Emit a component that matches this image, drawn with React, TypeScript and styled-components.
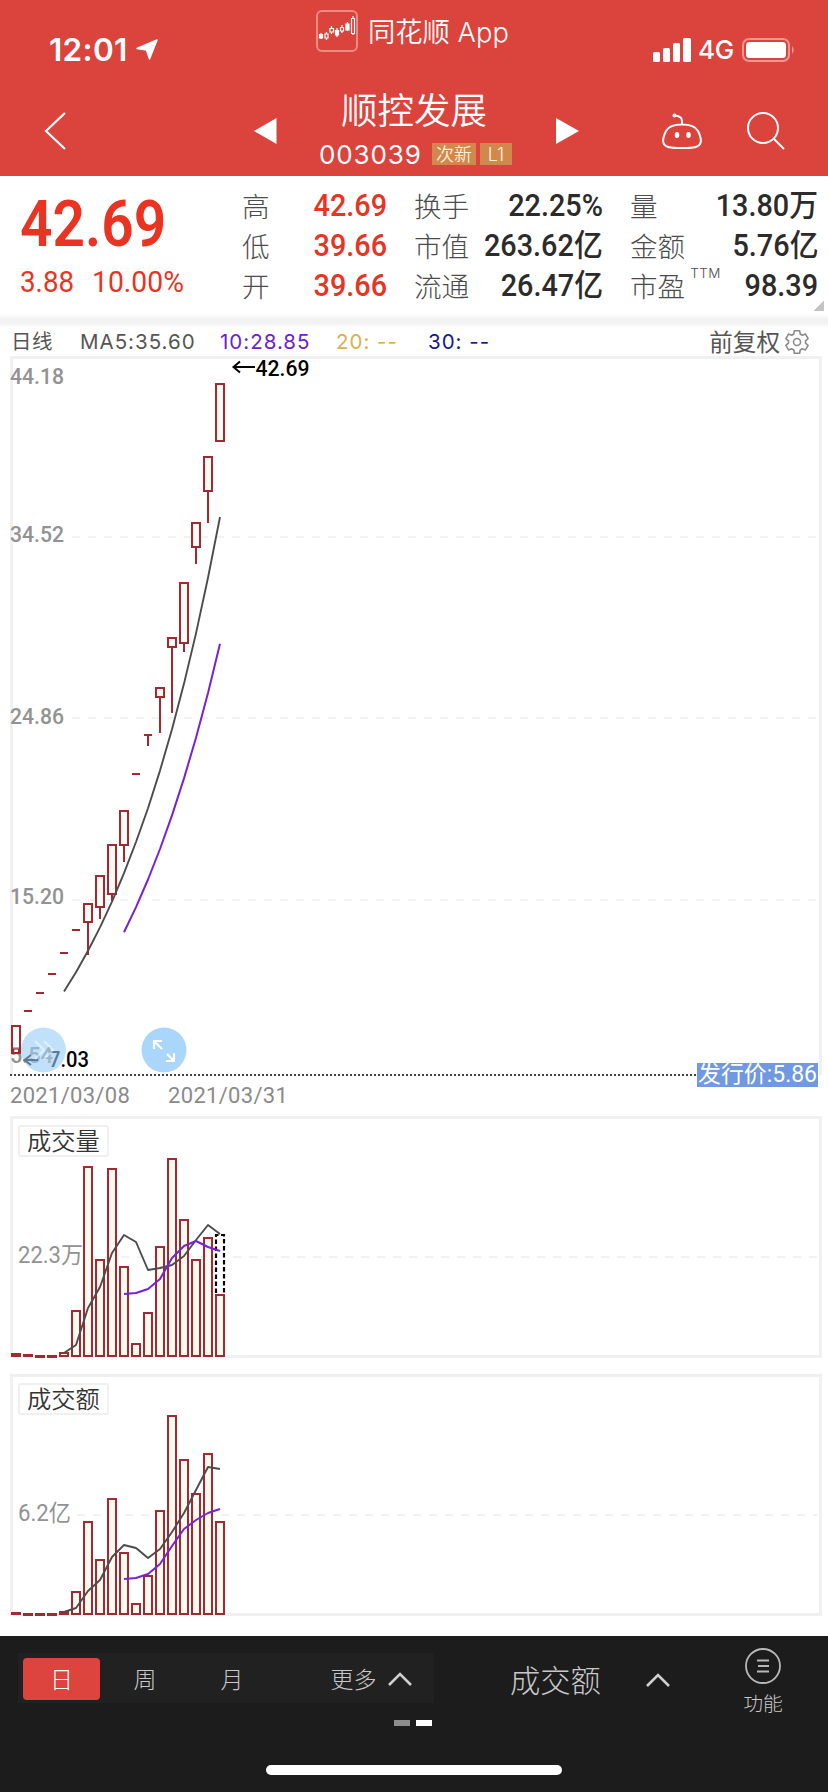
import React from "react";
import styled, { createGlobalStyle } from "styled-components";

const CJK = '"Noto Sans CJK SC", sans-serif';
const UI = `Inter, ${CJK}`;
const DIN = `Roboto, ${CJK}`;

const GlobalStyle = createGlobalStyle`
  * { box-sizing: border-box; }
  body { margin: 0; background: #fff; font-family: ${UI}; }
  svg { display: block; flex: none; overflow: visible; }
`;

const Page = styled.main`
  width: 828px;
  height: 1792px;
  display: flex;
  flex-direction: column;
  overflow: hidden;
  background: #fff;
`;

/* ---------- header ---------- */
const Header = styled.header`
  height: 176px;
  background: #db433d;
  color: #fff;
  display: flex;
  flex-direction: column;
`;
const StatusBar = styled.div`
  height: 88px;
  display: flex;
`;
const StatusSide = styled.div<{ $width: number; $left: number }>`
  width: ${(p) => p.$width}px;
  padding: 12px 0 0 ${(p) => p.$left}px;
  display: flex;
  align-items: center;
  height: 88px;
`;
const Clock = styled.span`
  font-size: 31.5px;
  font-weight: 600;
  line-height: 36px;
  width: 86px;
  letter-spacing: 0.3px;
`;
const Network = styled.span`
  font-size: 26px;
  font-weight: 500;
  line-height: 30px;
  width: 44px;
  letter-spacing: -0.3px;
`;
const AppBadge = styled.div`
  width: 300px;
  height: 62px;
  display: flex;
  align-items: center;
  gap: 10px;
  font-size: 27.3px;
  line-height: 34px;
  font-weight: 350;
  white-space: nowrap;
`;
const AppName = styled.span`
  padding-top: 3px;
`;
const NavBar = styled.nav`
  height: 88px;
  display: flex;
`;
const NavSlot = styled.div<{ $width: number; $left: number }>`
  width: ${(p) => p.$width}px;
  height: 86px;
  padding-left: ${(p) => p.$left}px;
  display: flex;
  align-items: center;
`;
const StockTitle = styled.div`
  width: 200px;
  padding-right: 4px;
  display: flex;
  flex-direction: column;
  align-items: center;
  white-space: nowrap;
`;
const StockName = styled.h1`
  margin: 0;
  font: 350 36.5px/42px ${CJK};
  height: 47px;
`;
const StockMeta = styled.div`
  display: flex;
  align-items: center;
  height: 38px;
  margin-right: -3px;
  gap: 4px;
`;
const StockCode = styled.span`
  font-size: 26px;
  width: 109px;
  letter-spacing: 0.9px;
`;
const Tag = styled.span<{ $width: number }>`
  width: ${(p) => p.$width}px;
  height: 22px;
  background: #d2884c;
  color: #fff1df;
  font: 350 18px/23px ${UI};
  text-align: center;
`;

/* ---------- quote ---------- */
const Quote = styled.section`
  height: 138px;
  display: flex;
`;
const LastPrice = styled.div`
  width: 242px;
  padding: 15px 0 0 20px;
  color: #e93323;
  font-family: ${DIN};
`;
const Squeezed = styled.span<{ $x: number; $right?: boolean }>`
  display: inline-block;
  white-space: nowrap;
  transform: scaleX(${(p) => p.$x});
  transform-origin: ${(p) => (p.$right ? "right" : "left")} center;
`;
const Price = styled.div`
  font-size: 65px;
  font-weight: 600;
  line-height: 66px;
`;
const Change = styled.div`
  display: flex;
  font-size: 29.5px;
  line-height: 50px;
`;
const ChangePart = styled.span<{ $width: number }>`
  width: ${(p) => p.$width}px;
`;
const StatColumn = styled.dl<{ $width: number; $gap: number }>`
  width: ${(p) => p.$width}px;
  margin: 10px ${(p) => p.$gap}px 0 0;
`;
const Stat = styled.div`
  height: 40px;
  display: flex;
  justify-content: space-between;
  align-items: center;
`;
const StatLabel = styled.dt`
  display: flex;
  height: 40px;
  font: 300 27.6px/39px ${CJK};
  color: #4c4c4c;
  white-space: nowrap;
`;
const Superscript = styled.sup`
  font: 300 13.5px/14px ${UI};
  letter-spacing: 0.4px;
  margin-left: 5px;
`;
const StatValue = styled.dd<{ $up?: boolean }>`
  margin: 0;
  width: 0;
  display: flex;
  justify-content: flex-end;
  font: 500 31px/40px ${DIN};
  color: ${(p) => (p.$up ? "#e93323" : "#2b2b2b")};
`;
const Divider = styled.div`
  height: 14px;
  display: flex;
  background: linear-gradient(#fff, #f3f3f3 35%, #f3f3f3 65%, #fff);
`;
const Corner = styled.div`
  width: 10px;
  height: 10px;
  margin: 125px 0 0 -4px;
  background: linear-gradient(135deg, transparent 50%, #c4c4c4 50%);
`;

/* ---------- legend ---------- */
const Legend = styled.div`
  height: 28px;
  padding: 0 19px 1px 11px;
  display: flex;
  align-items: center;
  font: 400 20.5px/27px ${UI};
  color: #555;
  white-space: nowrap;
`;
const LegendItem = styled.span<{ $width: number; $color?: string; $spacing?: number }>`
  width: ${(p) => p.$width}px;
  color: ${(p) => p.$color ?? "#555"};
  letter-spacing: ${(p) => p.$spacing ?? 1}px;
`;
const Adjust = styled.span`
  margin-left: auto;
  display: flex;
  align-items: center;
  gap: 5px;
  font: 400 23.6px/24px ${CJK};
`;
const AdjustLabel = styled.span`
  padding-bottom: 2px;
`;

/* ---------- charts ---------- */
const Panel = styled.section<{ $height: number; $open?: boolean }>`
  width: 812px;
  height: ${(p) => p.$height}px;
  margin-left: 10px;
  border: 3px solid #f0f0f0;
  ${(p) => p.$open && "border-bottom: 0;"}
`;
const Dates = styled.div`
  height: 41px;
  padding: 5px 0 0 10px;
  display: flex;
  gap: 38px;
  font: 400 22px/32px ${DIN};
  letter-spacing: 0.3px;
  color: #8a8a8a;
`;
const Gap = styled.div`
  height: 16px;
`;

/* ---------- footer ---------- */
const Footer = styled.footer`
  margin-top: auto;
  height: 156px;
  background: #1c1c1c;
  color: #c8c8c8;
  display: flex;
  flex-direction: column;
`;
const Tools = styled.div`
  height: 129px;
  padding-left: 18px;
  display: flex;
`;
const PeriodArea = styled.div`
  width: 416px;
  padding-top: 17px;
`;
const Periods = styled.div`
  height: 50px;
  padding: 5px;
  display: flex;
  background: #212121;
`;
const Period = styled.button<{ $width: number; $active?: boolean; $left?: number }>`
  width: ${(p) => p.$width}px;
  flex: none;
  height: 42px;
  padding: 0 0 0 ${(p) => p.$left ?? 0}px;
  border: 0;
  border-radius: 4px;
  display: flex;
  align-items: center;
  justify-content: center;
  gap: 11px;
  background: ${(p) => (p.$active ? "#dc443d" : "transparent")};
  color: ${(p) => (p.$active ? "#fff" : "#c8c8c8")};
  font: 300 23px/42px ${CJK};
`;
const PeriodLabel = styled.span`
  height: 44px;
`;
const Pager = styled.div`
  padding: 17px 2px 0 0;
  display: flex;
  justify-content: flex-end;
  gap: 6px;
`;
const PagerDot = styled.span<{ $on?: boolean }>`
  width: 16px;
  height: 6px;
  background: ${(p) => (p.$on ? "#fff" : "#8c8c8c")};
`;
const Indicator = styled.div`
  width: 309px;
  height: 88px;
  padding-left: 76px;
  display: flex;
  align-items: center;
  gap: 45px;
  font: 300 30.3px/40px ${CJK};
`;
const IndicatorName = styled.span`
  padding-bottom: 3px;
`;
const Menu = styled.div`
  width: 40px;
  padding-top: 12px;
  display: flex;
  flex-direction: column;
  align-items: center;
  font: 300 19.8px/28px ${CJK};
  white-space: nowrap;
  gap: 5px;
`;
const HomeBar = styled.div`
  width: 296px;
  height: 10px;
  border-radius: 5px;
  background: #fff;
  margin: 0 auto;
`;

/* ---------- data ---------- */
type Candle = { top: number; bottom?: number; wick?: number };
const candles: Candle[] = [
  { top: 1026, bottom: 1053 },
  { top: 1011 },
  { top: 993 },
  { top: 974 },
  { top: 953 },
  { top: 930 },
  { top: 904, bottom: 922, wick: 955 },
  { top: 876, bottom: 907, wick: 919 },
  { top: 845, bottom: 894, wick: 901 },
  { top: 811, bottom: 845, wick: 862 },
  { top: 774 },
  { top: 735, wick: 746 },
  { top: 688, bottom: 697, wick: 733 },
  { top: 638, bottom: 647, wick: 713 },
  { top: 583, bottom: 643, wick: 652 },
  { top: 523, bottom: 547, wick: 564 },
  { top: 457, bottom: 491, wick: 523 },
  { top: 384, bottom: 441 },
];
const volume = {
  tops: [1354, 1355, 1356, 1356, 1353, 1311, 1167, 1260, 1169, 1267, 1344, 1313, 1247, 1159, 1220, 1260, 1238, 1295],
  ma5: [1353, 1345, 1308, 1287, 1253, 1235, 1242, 1270, 1268, 1265, 1256, 1240, 1225, 1234],
  ma10: [1294, 1293, 1289, 1279, 1258, 1246, 1241, 1247, 1251],
};
const amount = {
  tops: [1613, 1614, 1614, 1614, 1612, 1592, 1522, 1560, 1499, 1553, 1604, 1576, 1511, 1416, 1460, 1494, 1454, 1522],
  ma5: [1612, 1608, 1591, 1580, 1557, 1545, 1548, 1558, 1549, 1532, 1513, 1490, 1467, 1469],
  ma10: [1579, 1578, 1574, 1564, 1546, 1529, 1520, 1513, 1509],
};

const RED = "#a02a2f";
const cx = (i: number) => 16 + 12 * i;
const line = (ys: number[], start: number) => ys.map((y, k) => `${cx(start + k)},${y}`).join(" ");
const average = (n: number) =>
  candles.slice(n - 1).map((_, k) => candles.slice(k, k + n).reduce((s, c) => s + c.top, 0) / n);

const GridLine = ({ y, from }: { y: number; from: number }) => (
  <line x1={from} x2={818} y1={y} y2={y} stroke="#efefef" strokeWidth={1.6} strokeDasharray="8 8" />
);
const ChartText = ({ x, y, w, color = "#929292", weight = 500, size = 22, children }: {
  x: number; y: number; w: number; color?: string; weight?: number; size?: number; children: string;
}) => (
  <text x={x} y={y} textLength={w} lengthAdjust="spacingAndGlyphs" fontFamily={DIN} fontSize={size} fontWeight={weight} fill={color}>
    {children}
  </text>
);
const Averages = ({ ma5, ma10 }: { ma5: number[]; ma10: number[] }) => (
  <g fill="none" strokeWidth={1.9} strokeLinejoin="round">
    <polyline points={line(ma5, 4)} stroke="#4c4c4c" />
    <polyline points={line(ma10, 9)} stroke="#7722d4" strokeWidth={2} />
  </g>
);

const PriceChart = () => (
  <svg width={806} height={714} viewBox="13 359 806 714">
    {[537, 718, 900].map((y) => <GridLine key={y} y={y} from={72} />)}
    <ChartText x={10} y={383.5} w={54}>44.18</ChartText>
    <ChartText x={10} y={542.3} w={54}>34.52</ChartText>
    <ChartText x={10} y={723.5} w={54}>24.86</ChartText>
    <ChartText x={10} y={904} w={54}>15.20</ChartText>
    <ChartText x={10} y={1063} w={43}>5.54</ChartText>
    {candles.map((c, i) => (
      <g key={i} stroke={RED} strokeWidth={2} fill="#fffaf6">
        {c.bottom ? (
          <rect x={cx(i) - 4} y={c.top} width={8} height={c.bottom - c.top} fillOpacity={i ? 1 : 0.3} />
        ) : (
          <line x1={cx(i) - 4} x2={cx(i) + 4} y1={c.top} y2={c.top} />
        )}
        {c.wick && <line x1={cx(i)} x2={cx(i)} y1={c.bottom ?? c.top} y2={c.wick} />}
      </g>
    ))}
    <rect x={13.5} y={1049} width={5} height={4} fill="none" stroke={RED} />
    <Averages ma5={average(5)} ma10={average(10)} />
    <g fill="none" stroke="#000" strokeWidth={2}>
      <path d="M255 367H234M240 361.5L233.5 367L240 372.5" />
      <path d="M38 1060H25M31 1055L24.5 1060L31 1065" />
    </g>
    <ChartText x={255.5} y={376} w={54} color="#000" weight={500}>42.69</ChartText>
    <ChartText x={49} y={1067} w={40} color="#000" weight={500}>7.03</ChartText>
    <line x1={10} x2={697} y1={1075} y2={1075} stroke="#444" strokeWidth={2} strokeDasharray="2 2" />
    <circle cx={43.5} cy={1050} r={22.5} fill="#98cdf9" fillOpacity={0.6} />
    <circle cx={164} cy={1050} r={22.5} fill="#abd6fb" />
    <g fill="none" stroke="#fff" strokeWidth={2.2}>
      <path d="M35 1041L44 1050L35 1059M44 1041L53 1050L44 1059" strokeOpacity={0.5} />
      <path d="M154 1049V1041H162M154 1041L162 1049M174 1053V1061H166M174 1061L167 1054" />
    </g>
    <rect x={697} y={1063} width={121} height={24} fill="#7099e2" />
    <ChartText x={698} y={1082} w={119} color="#fff" size={23} weight={400}>发行价:5.86</ChartText>
  </svg>
);

type BarChartProps = {
  top: number; grid: number; label: string; labelWidth: number; title: string;
  data: typeof volume; forecast?: boolean;
};
const BarChart = ({ top, grid, label, labelWidth, title, data, forecast }: BarChartProps) => {
  const base = top + 240;
  return (
    <svg width={806} height={236} viewBox={`13 ${top + 2} 806 236`}>
      <GridLine y={grid} from={24 + labelWidth} />
      <rect x={19} y={top + 9} width={89} height={30} rx={2} fill="#fff" stroke="#f0f0f0" strokeWidth={2} />
      <text x={27} y={top + 33} fontFamily={CJK} fontSize={24.3} fill="#333" fontWeight={350}>{title}</text>
      <ChartText x={18} y={grid + 5.5} w={labelWidth} size={23} weight={400}>{label}</ChartText>
      {data.tops.map((y, i) => (
        <rect key={i} x={cx(i) - 4} y={y} width={8} height={Math.max(base - 1 - y, 1)} fill="#fffaf0" stroke={RED} strokeWidth={2} />
      ))}
      {forecast && (
        <path d="M216 1293V1235H224V1293" fill="#fff" stroke="#000" strokeWidth={2.2} strokeDasharray="4.5 2.5" />
      )}
      <Averages ma5={data.ma5} ma10={data.ma10} />
    </svg>
  );
};

const Chevron = () => (
  <svg width={24} height={14} viewBox="0 0 24 14" fill="none" stroke="#d0d0d0" strokeWidth={2.6}>
    <path d="M1 13L12 2L23 13" />
  </svg>
);

const gearPath = () => {
  const corners: [number, number][] = [[-22, 8.6], [-13, 11.6], [13, 11.6], [22, 8.6]];
  const points = Array.from({ length: 6 }, (_, k) =>
    corners.map(([offset, r]) => {
      const a = ((k * 60 - 90 + offset) * Math.PI) / 180;
      return `${(12 + r * Math.cos(a)).toFixed(2)} ${(12 + r * Math.sin(a)).toFixed(2)}`;
    })
  ).flat();
  return `M${points.join("L")}Z`;
};

const stats = [
  { width: 145, gap: 27, rows: [["高", "42.69"], ["低", "39.66"], ["开", "39.66"]], up: true },
  { width: 189, gap: 27, rows: [["换手", "22.25%"], ["市值", "263.62亿"], ["流通", "26.47亿"]] },
  { width: 188, gap: 0, rows: [["量", "13.80万"], ["金额", "5.76亿"], ["市盈", "98.39"]] },
];

export default function App() {
  return (
    <Page>
      <GlobalStyle />
      <Header>
        <StatusBar>
          <StatusSide $width={316} $left={49}>
            <Clock>12:01</Clock>
            <svg width={24} height={22} viewBox="0 0 24 22" fill="#fff">
              <path d="M22 1L14.5 20L11.5 11L2 9.5Z" stroke="#fff" strokeWidth={1.5} strokeLinejoin="round" />
            </svg>
          </StatusSide>
          <AppBadge>
            <svg width={42} height={42} viewBox="0 0 42 42" fill="none">
              <rect x={1} y={1} width={40} height={40} rx={5} stroke="#f08a80" strokeWidth={2} />
              <g stroke="#fff" strokeWidth={1.2}>
                <path d="M5 23V29M10.5 22V30M15.5 16V24M21 18V27M26 15V23M31.5 12V21M37 6V25" />
                <path d="M3.5 24.5H6.5V28H3.5ZM30 14H33V20H30ZM19.5 20.5H22.5V25H19.5Z" fill="#fff" />
                <path d="M9 24H12V28H9ZM14 18.5H17.5V22H14ZM24.5 17.5H27.5V21H24.5ZM35.5 8.5H38.5V23.5H35.5Z" fill="#db433d" />
              </g>
            </svg>
            <AppName>同花顺 App</AppName>
          </AppBadge>
          <StatusSide $width={212} $left={37}>
            <svg width={45} height={24} viewBox="0 0 45 24" fill="#fff">
              <rect x={0} y={14} width={7} height={10} rx={1.5} />
              <rect x={10} y={10} width={7} height={14} rx={1.5} />
              <rect x={20} y={5} width={7} height={19} rx={1.5} />
              <rect x={30} y={0} width={8} height={24} rx={1.5} />
            </svg>
            <Network>4G</Network>
            <svg width={54} height={24} viewBox="0 0 54 24">
              <rect x={1} y={1} width={46} height={22} rx={6} fill="none" stroke="#f0958f" strokeWidth={2} />
              <rect x={4} y={4} width={40} height={16} rx={3.5} fill="#fff" />
              <path d="M50 8Q53.5 12 50 16Z" fill="#f0958f" />
            </svg>
          </StatusSide>
        </StatusBar>
        <NavBar>
          <NavSlot $width={254} $left={44}>
            <svg width={22} height={38} viewBox="0 0 22 38" fill="none" stroke="#fff" strokeWidth={2.2}>
              <path d="M21 1L2 19L21 37" />
            </svg>
          </NavSlot>
          <NavSlot $width={62} $left={0}>
            <svg width={23} height={26} viewBox="0 0 23 26" fill="#fff"><path d="M0 13L22.5 0V26Z" /></svg>
          </NavSlot>
          <StockTitle>
            <StockName>顺控发展</StockName>
            <StockMeta>
              <StockCode>003039</StockCode>
              <Tag $width={44}>次新</Tag>
              <Tag $width={32}>L1</Tag>
            </StockMeta>
          </StockTitle>
          <NavSlot $width={146} $left={40}>
            <svg width={23} height={26} viewBox="0 0 23 26" fill="#fff"><path d="M23 13L0 0V26Z" /></svg>
          </NavSlot>
          <NavSlot $width={84} $left={0}>
            <svg width={40} height={36} viewBox="0 0 40 36" fill="none" stroke="#fff" strokeWidth={2}>
              <path d="M20 11.5C27 11.5 33 12.5 36 18C38 22 39.5 27 38.5 30C37 34.5 32 35 20 35S3 34.5 1.5 30C.5 27 2 22 4 18C7 12.5 13 11.5 20 11.5ZM20 11V8C20 4.5 17 3 13 2.5" />
              <circle cx={12.5} cy={2.5} r={2} fill="#fff" stroke="none" />
              <ellipse cx={15} cy={22} rx={2.3} ry={3} fill="#fff" stroke="none" />
              <ellipse cx={26.5} cy={22} rx={2.3} ry={3} fill="#fff" stroke="none" />
            </svg>
          </NavSlot>
          <NavSlot $width={82} $left={1}>
            <svg width={38} height={38} viewBox="0 0 38 38" fill="none" stroke="#fff" strokeWidth={2}>
              <circle cx={16} cy={16} r={15} />
              <path d="M27 27L37 37" />
            </svg>
          </NavSlot>
        </NavBar>
      </Header>

      <Quote>
        <LastPrice>
          <Price><Squeezed $x={0.875}>42.69</Squeezed></Price>
          <Change>
            <ChangePart $width={72}><Squeezed $x={0.94}>3.88</Squeezed></ChangePart>
            <ChangePart $width={100}><Squeezed $x={0.96}>10.00%</Squeezed></ChangePart>
          </Change>
        </LastPrice>
        {stats.map((col, i) => (
          <StatColumn key={i} $width={col.width} $gap={col.gap}>
            {col.rows.map(([label, value]) => (
              <Stat key={label}>
                <StatLabel>
                  {label}
                  {label === "市盈" && <Superscript>TTM</Superscript>}
                </StatLabel>
                <StatValue $up={col.up}><Squeezed $x={0.93} $right>{value}</Squeezed></StatValue>
              </Stat>
            ))}
          </StatColumn>
        ))}
        <Corner />
      </Quote>
      <Divider />

      <Legend>
        <LegendItem $width={69} $spacing={0.5}>日线</LegendItem>
        <LegendItem $width={140}>MA5:35.60</LegendItem>
        <LegendItem $width={116} $color="#6a22d2">10:28.85</LegendItem>
        <LegendItem $width={92} $color="#dbb04f">20: --</LegendItem>
        <LegendItem $width={70} $color="#17178c">30: --</LegendItem>
        <Adjust>
          <AdjustLabel>前复权</AdjustLabel>
          <svg width={24} height={24} viewBox="0 0 24 24" fill="none" stroke="#8a8a8a" strokeWidth={1.6} strokeLinejoin="round">
            <path d={gearPath()} />
            <circle cx={12} cy={12} r={3.5} />
          </svg>
        </Adjust>
      </Legend>

      <Panel $height={719} $open><PriceChart /></Panel>
      <Dates>
        <span>2021/03/08</span>
        <span>2021/03/31</span>
      </Dates>
      <Panel $height={242}>
        <BarChart top={1117} grid={1257} label="22.3万" labelWidth={65} title="成交量" data={volume} forecast />
      </Panel>
      <Gap />
      <Panel $height={242}>
        <BarChart top={1375} grid={1515} label="6.2亿" labelWidth={53} title="成交额" data={amount} />
      </Panel>

      <Footer>
        <Tools>
          <PeriodArea>
            <Periods>
              <Period $width={77} $active><PeriodLabel>日</PeriodLabel></Period>
              <Period $width={90}><PeriodLabel>周</PeriodLabel></Period>
              <Period $width={84}><PeriodLabel>月</PeriodLabel></Period>
              <Period $width={155} $left={39}><PeriodLabel>更多</PeriodLabel><Chevron /></Period>
            </Periods>
            <Pager><PagerDot /><PagerDot $on /></Pager>
          </PeriodArea>
          <Indicator><IndicatorName>成交额</IndicatorName><Chevron /></Indicator>
          <Menu>
            <svg width={36} height={36} viewBox="0 0 36 36" fill="none" stroke="#b8b8b8" strokeWidth={1.8}>
              <circle cx={18} cy={18} r={17} />
              <path d="M12 12.5H24M13 18H24M12 23.5H24" strokeWidth={2} />
            </svg>
            功能
          </Menu>
        </Tools>
        <HomeBar />
      </Footer>
    </Page>
  );
}
